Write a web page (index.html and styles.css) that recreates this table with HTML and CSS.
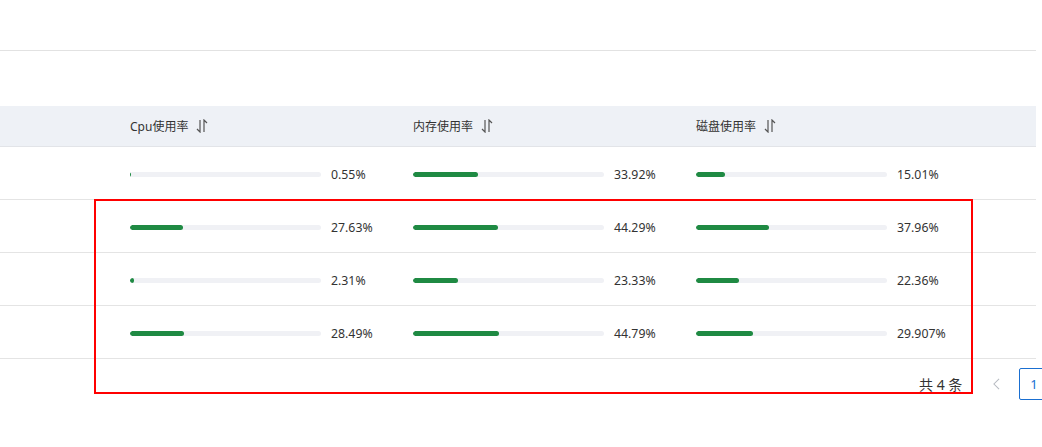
FILE: index.html
```html
<!DOCTYPE html>
<html lang="zh-CN">
  <head>
    <meta charset="UTF-8" />
    <title>主机资源使用率</title>
    <link rel="stylesheet" href="styles.css">
  </head>
  <body>
    <div class="page">
      <!-- top toolbar area (empty in this view) -->
      <div class="toolbar"></div>

      <div class="table">
        <div class="row head">
          <div class="cell first"></div>
          <div class="cell">Cpu使用率 <svg class="sort" viewBox="0 0 12 14"><path d="M4 1v12L1 10M8 13V1l3 3"/></svg></div>
          <div class="cell">内存使用率 <svg class="sort" viewBox="0 0 12 14"><path d="M4 1v12L1 10M8 13V1l3 3"/></svg></div>
          <div class="cell">磁盘使用率 <svg class="sort" viewBox="0 0 12 14"><path d="M4 1v12L1 10M8 13V1l3 3"/></svg></div>
          <div class="cell last"></div>
        </div>

        <div class="row">
          <div class="cell first"></div>
          <div class="cell"><div class="bar"><div class="fill" style="width:0.55%"></div></div><span class="pct">0.55%</span></div>
          <div class="cell"><div class="bar"><div class="fill" style="width:33.92%"></div></div><span class="pct">33.92%</span></div>
          <div class="cell"><div class="bar"><div class="fill" style="width:15.01%"></div></div><span class="pct">15.01%</span></div>
          <div class="cell last"></div>
        </div>

        <div class="row">
          <div class="cell first"></div>
          <div class="cell"><div class="bar"><div class="fill" style="width:27.63%"></div></div><span class="pct">27.63%</span></div>
          <div class="cell"><div class="bar"><div class="fill" style="width:44.29%"></div></div><span class="pct">44.29%</span></div>
          <div class="cell"><div class="bar"><div class="fill" style="width:37.96%"></div></div><span class="pct">37.96%</span></div>
          <div class="cell last"></div>
        </div>

        <div class="row">
          <div class="cell first"></div>
          <div class="cell"><div class="bar"><div class="fill" style="width:2.31%"></div></div><span class="pct">2.31%</span></div>
          <div class="cell"><div class="bar"><div class="fill" style="width:23.33%"></div></div><span class="pct">23.33%</span></div>
          <div class="cell"><div class="bar"><div class="fill" style="width:22.36%"></div></div><span class="pct">22.36%</span></div>
          <div class="cell last"></div>
        </div>

        <div class="row">
          <div class="cell first"></div>
          <div class="cell"><div class="bar"><div class="fill" style="width:28.49%"></div></div><span class="pct">28.49%</span></div>
          <div class="cell"><div class="bar"><div class="fill" style="width:44.79%"></div></div><span class="pct">44.79%</span></div>
          <div class="cell"><div class="bar"><div class="fill" style="width:29.907%"></div></div><span class="pct">29.907%</span></div>
          <div class="cell last"></div>
        </div>
      </div>

      <div class="pager">
        <span class="total">共 4 条</span>
        <svg class="prev" viewBox="0 0 8 14"><path d="M7 1L1 7l6 6"/></svg>
        <span class="num">1</span>
      </div>

      <!-- red highlight drawn over the table -->
      <div class="mark"></div>
    </div>
  </body>
</html>
```

FILE: styles.css
```css
/* Table of host resource usage */
body {
  margin: 0;
  background-color: #fff;
  font-family: "Noto Sans", "Noto Sans CJK SC", sans-serif;
  color: #333;
  overflow: hidden;
}

.page {
  position: relative; /* anchor for the red highlight */
  width: 1036px;
  height: 447px;
}

.toolbar {
  height: 50px;
  border-bottom: 1px solid #e2e2e2;
  margin-bottom: 55px;
}

.row {
  display: grid;
  grid-template-columns: 118px 283px 283px 283px 1fr;
  height: 52px;
  border-bottom: 1px solid #e4e4e4;
}

.row.head {
  height: 40px;
  background-color: #eef1f6;
  border-bottom: 1px solid #e2e4e8;
}

.cell {
  display: flex;
  align-items: center;
  padding-left: 12px;
  padding-top: 2px;
  font-size: 12px;
}

.head .cell {
  padding-top: 0;
  color: #333;
}

.sort {
  width: 12px;
  height: 14px;
  margin-left: 8px;
  fill: none;
  stroke: #555;
  stroke-width: 1.2;
}

.bar {
  width: 191px;
  height: 5px;
  border-radius: 3px;
  background-color: #f0f1f5;
  overflow: hidden;
}

.fill {
  height: 100%;
  border-radius: 3px;
  background-color: #1f8a43;
}

.pct {
  margin-left: 10px;
  color: #333;
  font-size: 12.3px;
}

.pager {
  display: flex;
  align-items: center;
  height: 32px;
  margin-top: 9px;
  padding-left: 919px;
  white-space: nowrap;
}

.pager > * {
  flex-shrink: 0;
}

.total {
  font-size: 14px;
  color: #333;
}

.prev {
  width: 7px;
  height: 12px;
  margin-left: 31px;
  fill: none;
  stroke: #b6bac1;
  stroke-width: 1.2;
}

.num {
  margin-left: 19px;
  box-sizing: border-box;
  width: 32px;
  height: 32px;
  border: 1px solid #1a6fd1;
  border-radius: 2px;
  padding-left: 10px;
  line-height: 30px;
  font-size: 13px;
  color: #1a6fd1;
}

.mark {
  position: absolute;
  left: 94px;
  top: 199px;
  width: 879px;
  height: 195px;
  box-sizing: border-box;
  border: 2px solid #f00;
}
```
